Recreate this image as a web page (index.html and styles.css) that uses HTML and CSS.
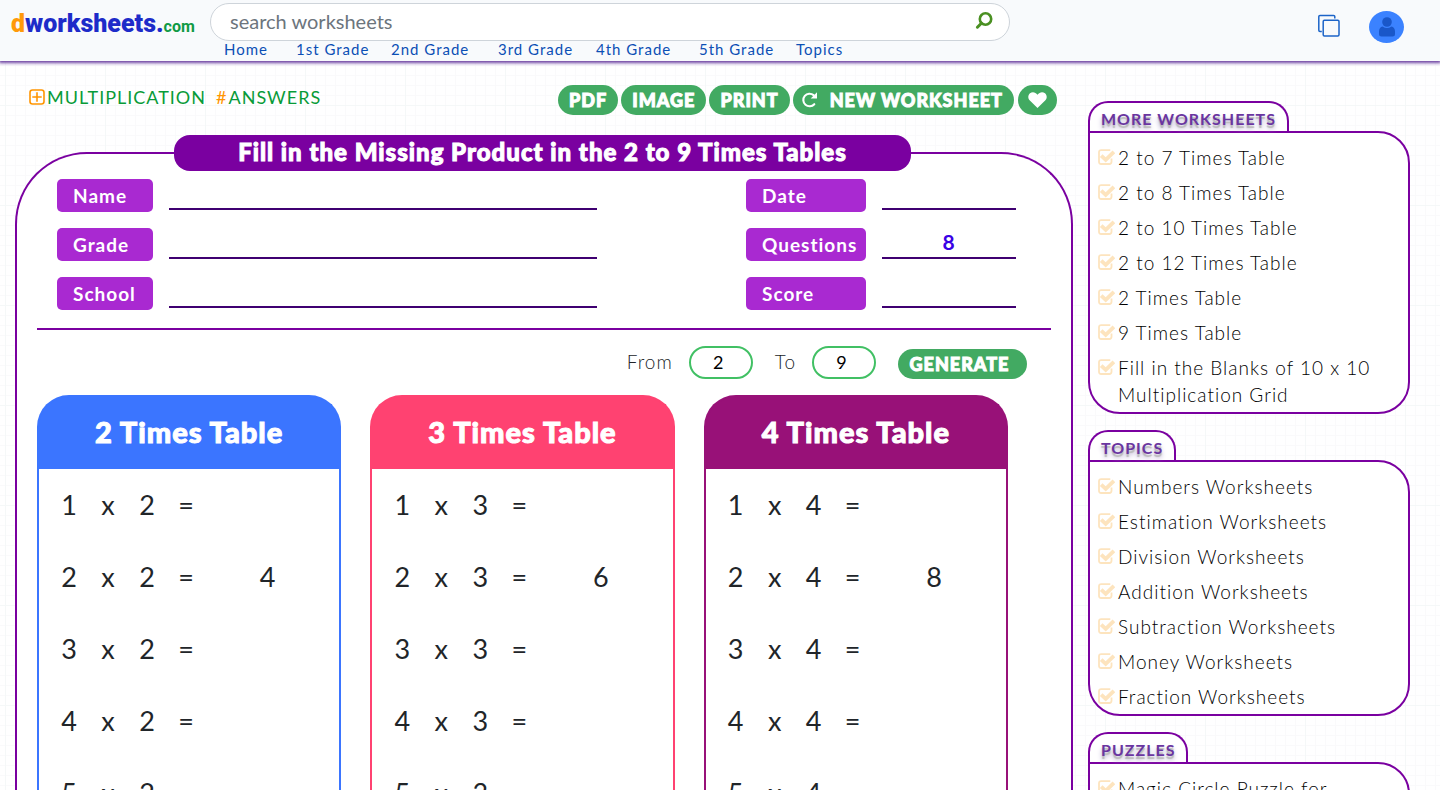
FILE: index.html
```html
<!DOCTYPE html>
<html lang="en">
<head>
<meta charset="utf-8">
<meta name="viewport" content="width=device-width, initial-scale=1">
<title>Fill in the Missing Product in the 2 to 9 Times Tables</title>
<link rel="stylesheet" href="styles.css">
</head>
<body>
<svg class="defs" width="0" height="0" aria-hidden="true">
  <symbol id="check" viewBox="0 0 17 16">
    <path d="M13.500 9.500V12.800Q13.500 15 11.300 15H3.200Q1 15 1 12.800V3.300Q1 1.100 3.200 1.100H12.300" fill="none" stroke="currentColor" stroke-width="1.800"/>
    <path d="M3.200 6.600L7.700 10.900L15.900 2.800" fill="none" stroke="currentColor" stroke-width="3.800"/>
  </symbol>
</svg>

<header class="topbar">
  <a class="logo" href="#"><span class="logo-d">d</span>worksheets.<span class="logo-com">com</span></a>
  <div class="finder">
    <form class="search">
      <input class="search-input" type="search" placeholder="search worksheets" aria-label="search worksheets">
      <button class="search-button" type="button" aria-label="Search">
        <svg width="18" height="18" viewBox="0 0 18 18" fill="none" stroke="#4a9022"><circle cx="10.500" cy="7" r="5.700" stroke-width="2.600"/><path d="M6.400 11.200L2.400 15.200" stroke-width="3" stroke-linecap="round"/></svg>
      </button>
    </form>
    <nav class="nav">
      <a href="#">Home</a><a href="#">1st Grade</a><a href="#">2nd Grade</a><a href="#">3rd Grade</a><a href="#">4th Grade</a><a href="#">5th Grade</a><a href="#">Topics</a>
    </nav>
  </div>
  <div class="tools">
    <button class="copy" type="button" aria-label="Copy">
      <svg width="24" height="24" viewBox="0 0 24 24" fill="none" stroke="#1c64c8" stroke-width="1.500"><rect x="6.200" y="6.200" width="15.800" height="15.800" rx="1.200"/><path d="M17.800 4.500V2.600Q17.800 1.400 16.600 1.400H3Q1.800 1.400 1.800 2.600V16.200Q1.800 17.400 3 17.400H4.800"/></svg>
    </button>
    <button class="avatar" type="button" aria-label="Account">
      <svg width="18" height="20" viewBox="0 0 18 20" fill="#1a57c9"><circle cx="9" cy="5" r="4.800"/><path d="M4.600 9.400Q9 12.400 13.400 9.400Q17 10.200 17 14.500V17Q17 19.500 14.500 19.500H3.500Q1 19.500 1 17V14.500Q1 10.200 4.600 9.400Z"/></svg>
    </button>
  </div>
</header>

<div class="page">
  <main class="main">
    <div class="toolbar">
      <div class="crumbs">
        <a href="#"><svg width="16" height="16" viewBox="0 0 16 16" fill="none" stroke="#ff9500" stroke-width="1.600"><rect x="1" y="1" width="14" height="14" rx="2.500"/><path d="M8 3.300V12.700M3.300 8H12.700"/></svg>MULTIPLICATION</a>
        <a href="#"><span class="hash">#</span>ANSWERS</a>
      </div>
      <div class="actions">
        <button class="pill" type="button">PDF</button>
        <button class="pill" type="button">IMAGE</button>
        <button class="pill" type="button">PRINT</button>
        <button class="pill pill-new" type="button"><svg width="18" height="18" viewBox="0 0 18 18"><path d="M13.300 13.200A6.300 6.300 0 1 1 12.600 4.100" fill="none" stroke="#fff" stroke-width="2.100" stroke-linecap="round"/><path d="M16 1.300V7.600H9.700Z" fill="#fff"/></svg>NEW WORKSHEET</button>
        <button class="pill pill-heart" type="button" aria-label="Favourite"><svg width="19" height="16" viewBox="0 0 19 16"><path d="M9.500 16L1.600 8.300C-.4 6.200 0 3 2 1.300C4.300-.5 7.500 0 9.500 2.800C11.500 0 14.700-.5 17 1.300C19 3 19.400 6.200 17.400 8.300Z" fill="#fff"/></svg></button>
      </div>
    </div>

    <section class="sheet">
      <h1 class="title">Fill in the Missing Product in the 2 to 9 Times Tables</h1>
      <div class="fields">
        <div class="field-group wide">
          <label for="name">Name</label><input id="name" type="text">
          <label for="grade">Grade</label><input id="grade" type="text">
          <label for="school">School</label><input id="school" type="text">
        </div>
        <div class="field-group narrow">
          <label for="date">Date</label><input id="date" type="text">
          <label for="questions">Questions</label><input id="questions" type="text" value="8">
          <label for="score">Score</label><input id="score" type="text">
        </div>
      </div>
      <form class="range">
        <label for="from">From</label><input id="from" type="text" value="2">
        <label for="to">To</label><input id="to" type="text" value="9">
        <button class="pill generate" type="button">GENERATE</button>
      </form>
      <div class="cards">
        <article class="card blue">
          <h2>2 Times Table</h2>
          <table>
            <tr><td>1</td><td>x</td><td>2</td><td>=</td><td></td></tr>
            <tr><td>2</td><td>x</td><td>2</td><td>=</td><td>4</td></tr>
            <tr><td>3</td><td>x</td><td>2</td><td>=</td><td></td></tr>
            <tr><td>4</td><td>x</td><td>2</td><td>=</td><td></td></tr>
            <tr><td>5</td><td>x</td><td>2</td><td>=</td><td></td></tr>
          </table>
        </article>
        <article class="card pink">
          <h2>3 Times Table</h2>
          <table>
            <tr><td>1</td><td>x</td><td>3</td><td>=</td><td></td></tr>
            <tr><td>2</td><td>x</td><td>3</td><td>=</td><td>6</td></tr>
            <tr><td>3</td><td>x</td><td>3</td><td>=</td><td></td></tr>
            <tr><td>4</td><td>x</td><td>3</td><td>=</td><td></td></tr>
            <tr><td>5</td><td>x</td><td>3</td><td>=</td><td></td></tr>
          </table>
        </article>
        <article class="card plum">
          <h2>4 Times Table</h2>
          <table>
            <tr><td>1</td><td>x</td><td>4</td><td>=</td><td></td></tr>
            <tr><td>2</td><td>x</td><td>4</td><td>=</td><td>8</td></tr>
            <tr><td>3</td><td>x</td><td>4</td><td>=</td><td></td></tr>
            <tr><td>4</td><td>x</td><td>4</td><td>=</td><td></td></tr>
            <tr><td>5</td><td>x</td><td>4</td><td>=</td><td></td></tr>
          </table>
        </article>
      </div>
    </section>
  </main>

  <aside class="side">
    <section class="box">
      <h2>MORE WORKSHEETS</h2>
      <ul>
        <li><svg><use href="#check"/></svg><a href="#">2 to 7 Times Table</a></li>
        <li><svg><use href="#check"/></svg><a href="#">2 to 8 Times Table</a></li>
        <li><svg><use href="#check"/></svg><a href="#">2 to 10 Times Table</a></li>
        <li><svg><use href="#check"/></svg><a href="#">2 to 12 Times Table</a></li>
        <li><svg><use href="#check"/></svg><a href="#">2 Times Table</a></li>
        <li><svg><use href="#check"/></svg><a href="#">9 Times Table</a></li>
        <li><svg><use href="#check"/></svg><a href="#">Fill in the Blanks of 10 x 10 Multiplication Grid</a></li>
      </ul>
    </section>
    <section class="box">
      <h2>TOPICS</h2>
      <ul>
        <li><svg><use href="#check"/></svg><a href="#">Numbers Worksheets</a></li>
        <li><svg><use href="#check"/></svg><a href="#">Estimation Worksheets</a></li>
        <li><svg><use href="#check"/></svg><a href="#">Division Worksheets</a></li>
        <li><svg><use href="#check"/></svg><a href="#">Addition Worksheets</a></li>
        <li><svg><use href="#check"/></svg><a href="#">Subtraction Worksheets</a></li>
        <li><svg><use href="#check"/></svg><a href="#">Money Worksheets</a></li>
        <li><svg><use href="#check"/></svg><a href="#">Fraction Worksheets</a></li>
      </ul>
    </section>
    <section class="box">
      <h2>PUZZLES</h2>
      <ul>
        <li><svg><use href="#check"/></svg><a href="#">Magic Circle Puzzle for Addition</a></li>
      </ul>
    </section>
  </aside>
</div>
</body>
</html>
```
FILE: styles.css
```css
* {
  box-sizing: border-box;
}

body {
  margin: 0;
  height: 100vh;
  overflow: hidden;
  font-family: Lato, "Open Sans", sans-serif;
  letter-spacing: 1px;
  color: #212529;
  background-color: #fff;
  background-image:
    linear-gradient(#f5f8f8 1px, transparent 1px),
    linear-gradient(90deg, #f5f8f8 1px, transparent 1px),
    linear-gradient(#fafafb 1px, transparent 1px),
    linear-gradient(90deg, #fafafb 1px, transparent 1px);
  background-size: 100px 100px, 100px 100px, 10px 10px, 10px 10px;
  background-position: 5px 5px;
}

a {
  color: inherit;
  text-decoration: none;
}

button,
input {
  font-family: inherit;
  letter-spacing: inherit;
}

button {
  border: 0;
  padding: 0;
  background: none;
}

.defs {
  position: absolute;
}

/* Header */
.topbar {
  display: flex;
  height: 61px;
  background: #f8fafc;
  box-shadow: 0 1px 3px 1px #6b3fa0;
}

.logo {
  width: 210px;
  padding: 8px 0 0 11px;
  font: 900 25px/32px Roboto, sans-serif;
  letter-spacing: 0;
  white-space: nowrap;
  color: #1d2bc9;
}

.logo-d {
  color: #ff9a0a;
}

.logo-com {
  font-size: 16px;
  font-weight: 700;
  color: #109a45;
}

.finder {
  flex: 0 1 800px;
  padding-top: 3px;
}

.search {
  display: flex;
  height: 38px;
  padding: 0 16px 0 19px;
  border: 1px solid #ced4da;
  border-radius: 19px;
  background: #fff;
}

.search-input {
  flex: 1;
  min-width: 0;
  padding: 0 0 3px;
  border: 0;
  outline: 0;
  background: none;
  font-size: 20px;
  letter-spacing: 0;
}

.search-input::placeholder {
  color: #6c757d;
}

.nav {
  display: grid;
  grid-template-columns: 72px 95px 107px 98px 103px 97px auto;
  padding-left: 14px;
  font-size: 15px;
  line-height: 16px;
  color: #0b4fb5;
  white-space: nowrap;
}

.tools {
  display: flex;
  flex: 1;
  justify-content: flex-end;
  align-items: flex-start;
  gap: 28px;
  padding: 11px 36px 0 0;
}

.copy {
  height: 30px;
}

.copy svg {
  display: block;
}

.avatar {
  display: grid;
  place-items: center;
  width: 35px;
  height: 32px;
  border-radius: 50%;
  background: #3b82ff;
}

/* Page columns */
.page {
  display: flex;
  gap: 15px;
  padding: 24px 30px 0 15px;
}

.main {
  flex: 1;
  min-width: 0;
}

.toolbar {
  display: flex;
  justify-content: space-between;
  padding: 0 16px 0 14px;
}

.crumbs {
  display: flex;
  gap: 10px;
  font-size: 18px;
  line-height: 25px;
  color: #089b38;
}

.crumbs svg {
  margin-right: 2px;
  vertical-align: -1px;
}

.hash {
  margin-right: 1px;
  color: #ff9500;
}

.actions {
  display: flex;
  gap: 3px;
}

.pill {
  height: 30px;
  padding: 0 10px;
  border-radius: 15px;
  background: #42aa62;
  color: #fff;
  font-size: 18px;
  font-weight: 900;
  -webkit-text-stroke: 1px #fff;
  white-space: nowrap;
}

.actions .pill {
  padding: 0 11px;
}

.actions .pill-new {
  display: flex;
  align-items: center;
  gap: 11px;
  padding-left: 8px;
}

.actions .pill-heart {
  width: 39px;
  margin-left: 1px;
  padding: 0;
}

.pill-heart svg {
  display: block;
  margin: 0 auto;
}

/* Worksheet */
.sheet {
  margin-top: 37px;
  padding: 0 20px;
  border: 2px solid #7a00a0;
  border-bottom: 0;
  border-radius: 72px 72px 0 0;
  background: #fff;
}

.title {
  height: 36px;
  margin: -19px 140px 8px 137px;
  border-radius: 16px;
  background: #7a00a0;
  color: #fff;
  font-size: 24px;
  font-weight: 900;
  -webkit-text-stroke: 1px #fff;
  line-height: 34px;
  text-align: center;
  white-space: nowrap;
}

.fields {
  display: flex;
  gap: 149px;
  padding: 0 35px 18px 20px;
  border-bottom: 2px solid #7a00a0;
}

.field-group {
  display: grid;
  gap: 16px;
}

.wide {
  flex: 1;
  grid-template-columns: 96px 1fr;
}

.narrow {
  grid-template-columns: 120px 134px;
}

.fields label {
  padding-left: 16px;
  border-radius: 5px;
  background: #a929d1;
  color: #fff;
  font-size: 19px;
  font-weight: 700;
  line-height: 33px;
}

.fields input {
  width: 100%;
  height: 31px;
  padding: 0 0 2px;
  border: 0;
  border-bottom: 2px solid #3f0071;
  background: none;
  color: #3a00e5;
  font-size: 21px;
  font-weight: 700;
  text-align: center;
}

.range {
  display: flex;
  justify-content: flex-end;
  padding: 16px 24px 16px 0;
  font-size: 19px;
  font-weight: 300;
  line-height: 31px;
}

.range input {
  width: 64px;
  height: 33px;
  margin: 0 22px 0 16px;
  padding: 0 4px 2px 0;
  border: 2px solid #41c064;
  border-radius: 17px;
  background: #fff;
  font-size: 18px;
  text-align: center;
}

.generate {
  width: 129px;
  margin-top: 3px;
  padding-right: 16px;
}

.cards {
  display: grid;
  grid-template-columns: repeat(3, 1fr);
  gap: 29px;
  padding-right: 43px;
}

.card {
  border: 2px solid var(--tone);
  border-bottom: 0;
  border-radius: 32px 32px 0 0;
  background: linear-gradient(var(--tone) 72px, #fff 72px);
}

.blue {
  --tone: #3b75ff;
}

.pink {
  --tone: #ff4271;
}

.plum {
  --tone: #981178;
}

.card h2 {
  height: 72px;
  margin: 0;
  color: #fff;
  font-size: 29px;
  font-weight: 900;
  -webkit-text-stroke: 1px #fff;
  line-height: 69px;
  text-align: center;
}

.card table {
  margin-left: 11px;
  border-collapse: collapse;
  font-size: 27px;
  line-height: 72px;
}

.card td {
  width: 39px;
  padding: 0;
  text-align: center;
}

.card td:last-child {
  width: 124px;
}

/* Sidebar */
.side {
  flex: 0 0 322px;
  padding-top: 16px;
}

.box {
  margin-bottom: 16px;
}

.box h2 {
  width: fit-content;
  height: 30px;
  margin: 0;
  padding: 0 11px;
  border: 2px solid #7a00a0;
  border-bottom: 0;
  border-radius: 20px 20px 0 0;
  background: #fff;
  color: #6a35a0;
  font-size: 16px;
  font-weight: 700;
  line-height: 32px;
  text-shadow: 0 3px 1px #bbb, 0 4px 5px #b5a8d0;
}

.box ul {
  display: grid;
  gap: 8px;
  margin: 0;
  padding: 11px 8px 4px;
  border: 2px solid #7a00a0;
  border-radius: 0 32px 32px 32px;
  background: #fff;
  list-style: none;
  color: #000;
  font-size: 19px;
  font-weight: 300;
  line-height: 27px;
}

.box li {
  display: flex;
  gap: 3px;
}

.box li svg {
  flex: none;
  width: 17px;
  height: 16px;
  margin-top: 5px;
  color: #fde4be;
}
```
